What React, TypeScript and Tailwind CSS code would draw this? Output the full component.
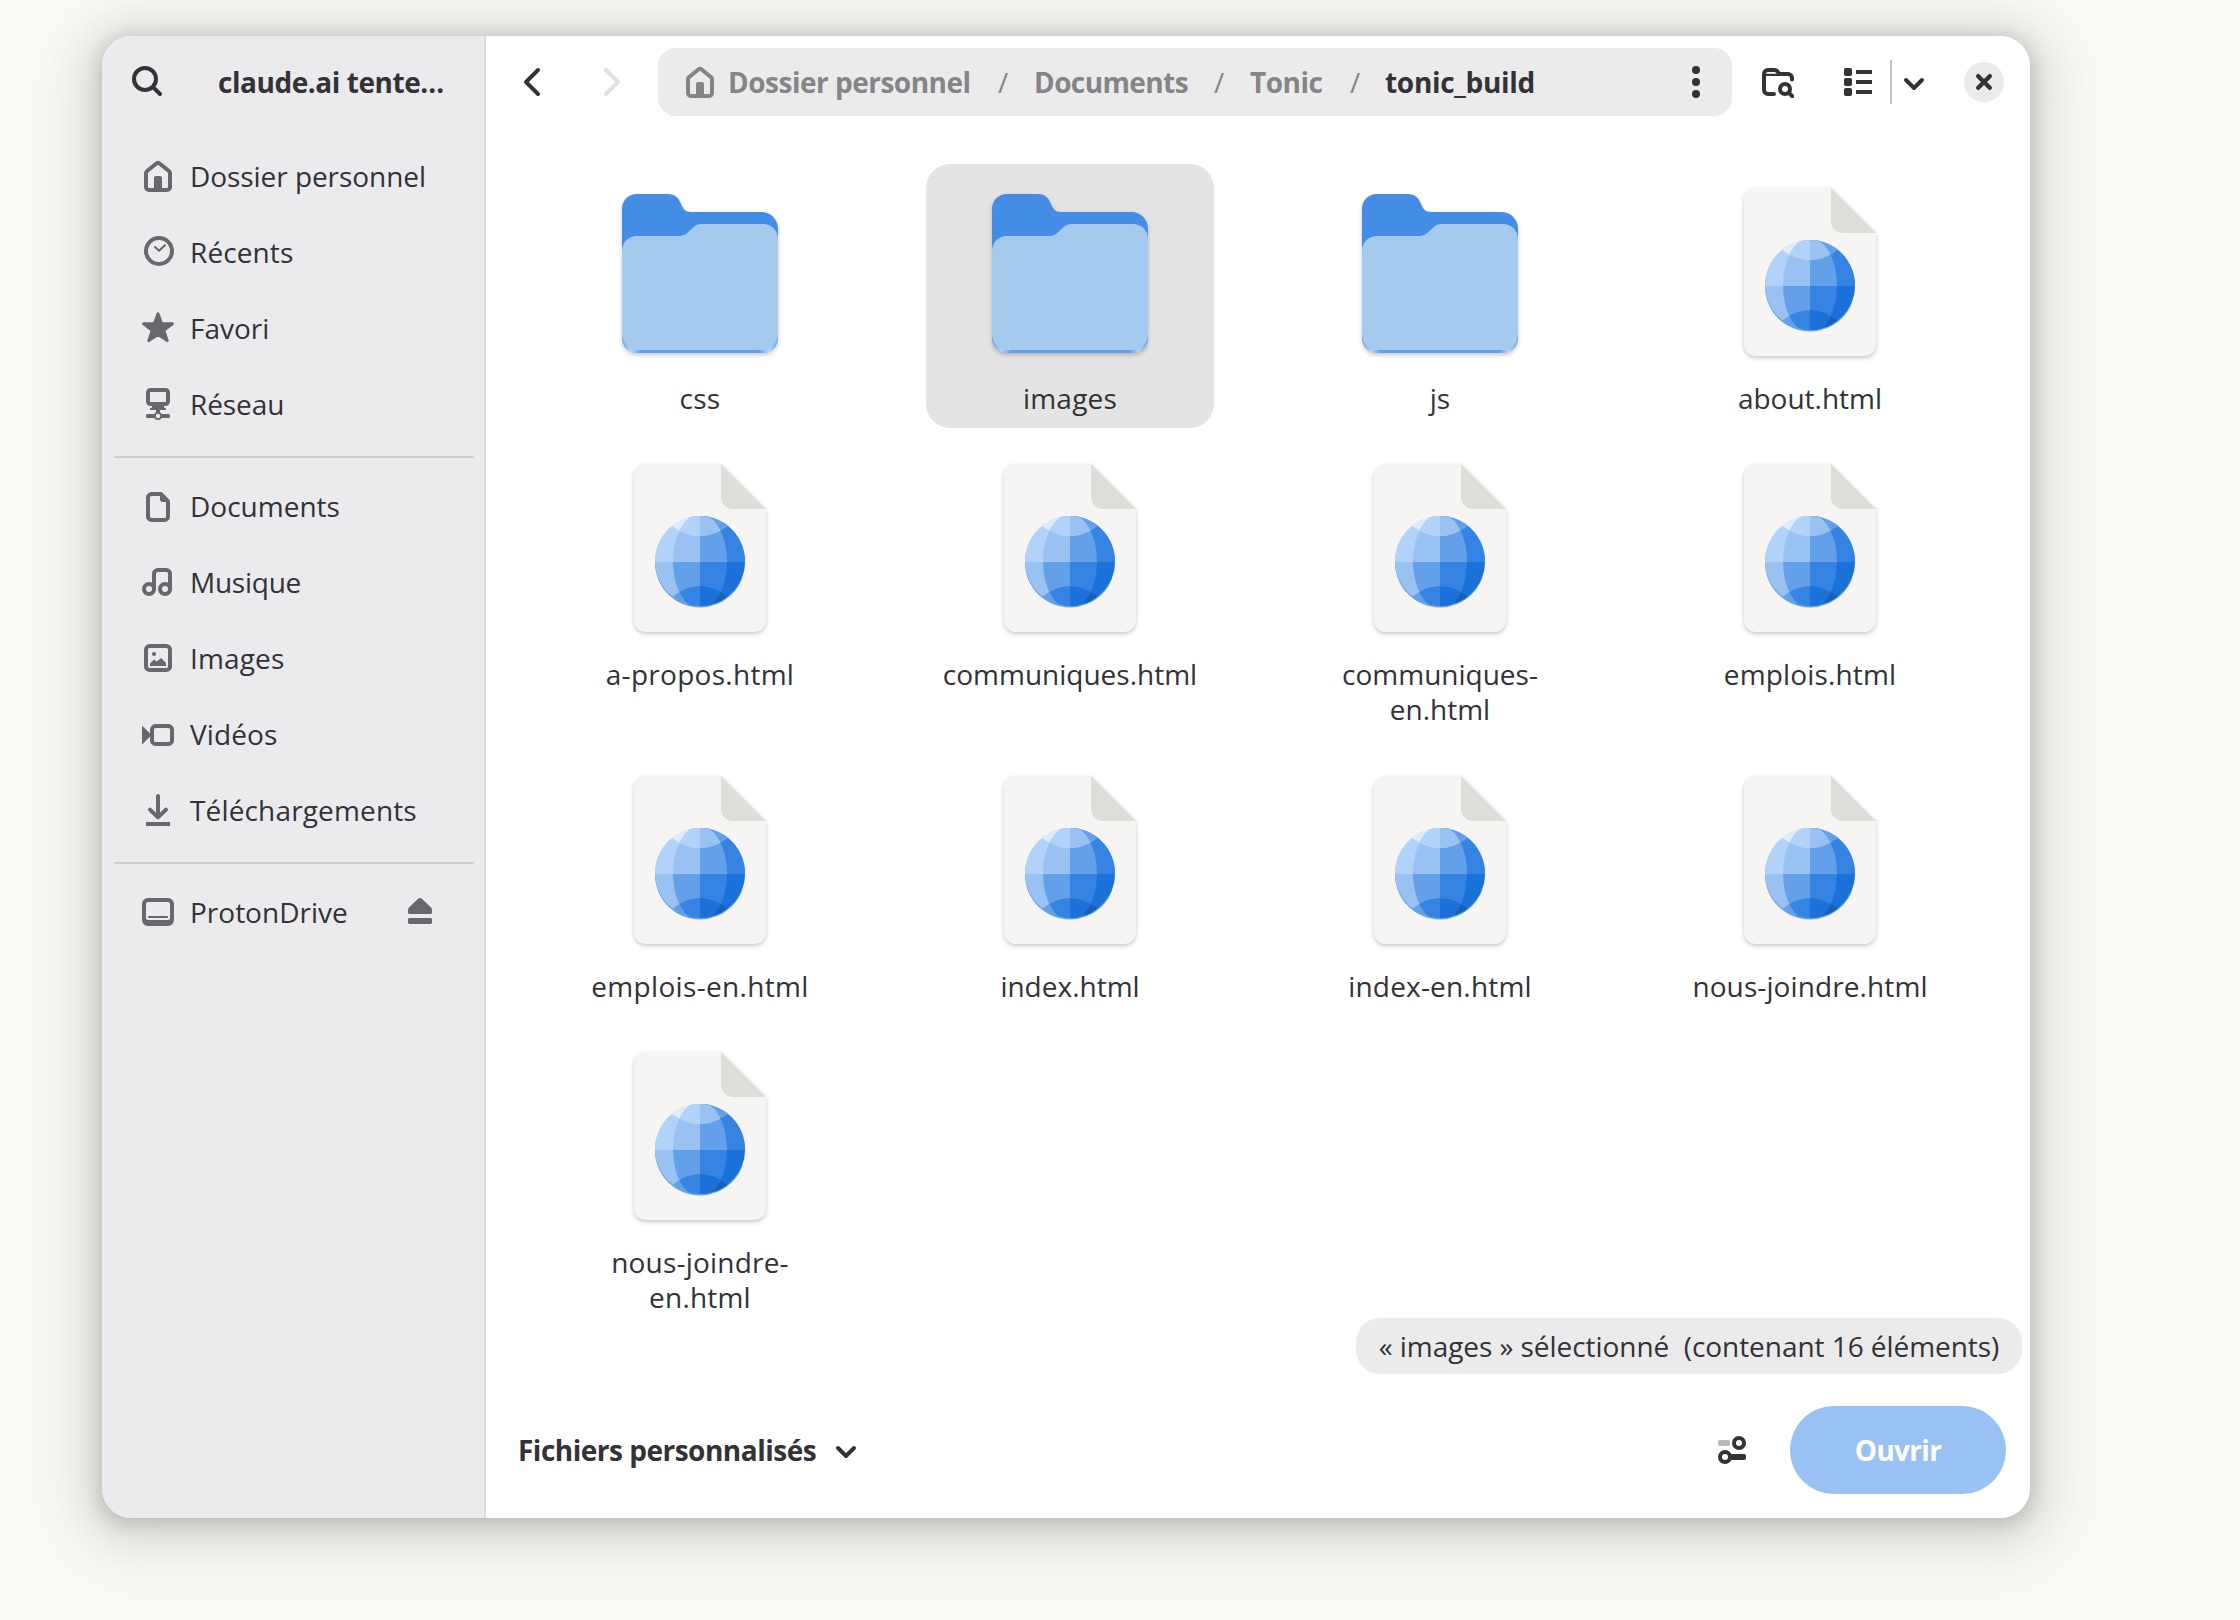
import React from "react";

type IconProps = { children: React.ReactNode; className?: string };

function Icon({ children, className = "" }: IconProps) {
  return (
    <svg
      viewBox="0 0 16 16"
      className={`h-8 w-8 shrink-0 ${className}`}
      fill="none"
      stroke="currentColor"
      strokeWidth="2"
      strokeLinecap="round"
      strokeLinejoin="round"
    >
      {children}
    </svg>
  );
}

const Solid = ({ children }: { children: React.ReactNode }) => (
  <g fill="currentColor" stroke="none">
    {children}
  </g>
);

const HomeIcon = () => (
  <Icon>
    <path d="M2 6.7v6.8A1.5 1.5 0 0 0 3.5 15h9a1.5 1.5 0 0 0 1.5-1.5V6.7a1.6 1.6 0 0 0-.55-1.2L8.65 1.65a1 1 0 0 0-1.3 0L2.55 5.5A1.6 1.6 0 0 0 2 6.7z" />
    <Solid>
      <path d="M6 15V9a1 1 0 0 1 1-1h2a1 1 0 0 1 1 1v6z" />
    </Solid>
  </Icon>
);

const RecentIcon = () => (
  <Icon>
    <circle cx="8.5" cy="7.5" r="6.5" />
    <path d="M6.5 5.5l2 1.9 3-2.8" strokeWidth="1" />
  </Icon>
);

const StarIcon = () => (
  <Icon>
    <path
      d="M8 .9l1.75 4.8 5.45.2-4.3 3.3 1.7 5.1L8 11.2l-4.6 3.1 1.7-5.1L.8 5.9l5.45-.2z"
      fill="currentColor"
      strokeWidth="1.5"
    />
  </Icon>
);

const NetworkIcon = () => (
  <Icon>
    <rect x="3" y="1" width="10" height="7" rx="1.3" />
    <Solid>
      <path d="M5 9h6v.6a.4.4 0 0 0 .4.4h.6v1H9v2.2H7V11H4v-1h.6a.4.4 0 0 0 .4-.4z" />
      <rect x="2" y="13" width="12" height="2" rx=".8" />
      <circle cx="8" cy="14" r="2" />
      <circle cx="8" cy="14" r="1.1" className="fill-[#ebebed]" />
    </Solid>
  </Icon>
);

const DocumentIcon = () => (
  <Icon>
    <path d="M4.8 2h4.6L13 5.6v7.6A1.8 1.8 0 0 1 11.2 15H4.8A1.8 1.8 0 0 1 3 13.2V3.8A1.8 1.8 0 0 1 4.8 2z" />
    <Solid>
      <path d="M9 2v2.8A1.2 1.2 0 0 0 10.2 6H13.5z" />
    </Solid>
  </Icon>
);

const MusicIcon = () => (
  <Icon>
    <circle cx="3.5" cy="11.5" r="2.5" />
    <circle cx="11.5" cy="11.5" r="2.5" />
    <path d="M6 11.5V3.8A1.8 1.8 0 0 1 7.8 2h4.4A1.8 1.8 0 0 1 14 3.8v7.7" />
  </Icon>
);

const ImageIcon = () => (
  <Icon>
    <rect x="2" y="2" width="12" height="12" rx="1.8" />
    <Solid>
      <circle cx="6" cy="6" r="1.05" />
      <path d="M4 12v-1.3l2-1.9 1.3 1L9.6 8l2.4 2.5V12z" />
    </Solid>
  </Icon>
);

const VideoIcon = () => (
  <Icon>
    <rect x="5" y="4" width="10" height="9" rx="1.8" />
    <Solid>
      <path d="M0 4.2v8.6a.2.2 0 0 0 .4.1L4.8 8.5.4 4.1A.2.2 0 0 0 0 4.2z" />
    </Solid>
  </Icon>
);

const DownloadIcon = () => (
  <Icon>
    <path d="M8 1v10.5M4 7.8l4 3.9 4-3.9" />
    <path d="M2 15h12" strokeLinecap="butt" />
  </Icon>
);

const DriveIcon = () => (
  <Icon>
    <Solid>
      <path
        fillRule="evenodd"
        d="M3 1h10a3 3 0 0 1 3 3v8a3 3 0 0 1-3 3H3a3 3 0 0 1-3-3V4a3 3 0 0 1 3-3zm0 2a1 1 0 0 0-1 1v7a1 1 0 0 0 1 1h10a1 1 0 0 0 1-1V4a1 1 0 0 0-1-1z"
      />
      <rect x="3" y="10" width="10" height="1" rx=".4" />
    </Solid>
  </Icon>
);

const EjectIcon = () => (
  <Icon>
    <Solid>
      <path d="M7.2 1.3a1.2 1.2 0 0 1 1.6 0l4.7 4.5c.3.3.5.7.5 1.1V8.2a.8.8 0 0 1-.8.8H2.8a.8.8 0 0 1-.8-.8V6.9c0-.4.2-.8.5-1.1z" />
      <rect x="2" y="11" width="12" height="3" rx=".7" />
    </Solid>
  </Icon>
);

const SearchIcon = () => (
  <Icon>
    <circle cx="6.5" cy="6.5" r="5.5" />
    <path d="M10.8 10.8L14 14" />
  </Icon>
);

const ChevronDown = () => (
  <Icon>
    <path d="M4 7l4 4 4-4" />
  </Icon>
);

const FolderSearchIcon = () => (
  <Icon>
    <path d="M6 14H3a2 2 0 0 1-2-2V4a2 2 0 0 1 2-2h3.3c.5 0 .9.2 1.2.5L8.8 4H13a2 2 0 0 1 2 2v.8" />
    <path d="M1.5 4.4H9" strokeWidth="1.1" />
    <circle cx="11.5" cy="11.5" r="2.5" />
    <path d="M13.5 13.5L15.1 15.1" />
  </Icon>
);

const ListIcon = () => (
  <Icon>
    <Solid>
      <rect x="1" y="1" width="4" height="4" rx=".9" />
      <rect x="1" y="6" width="4" height="4" rx=".9" />
      <rect x="1" y="11" width="4" height="4" rx=".9" />
      <rect x="7" y="2" width="8" height="2" />
      <rect x="7" y="7" width="8" height="2" />
      <rect x="7" y="12" width="8" height="2" />
    </Solid>
  </Icon>
);

const OptionsIcon = () => (
  <Icon>
    <rect x="1" y="3" width="6" height="3" rx="1" fill="#b8b8ba" stroke="none" />
    <circle cx="11.5" cy="4.5" r="2.5" />
    <circle cx="4.5" cy="11.5" r="2.5" />
    <rect x="7" y="10" width="8" height="3" rx="1" fill="currentColor" stroke="none" />
  </Icon>
);

function FolderArt() {
  return (
    <svg viewBox="0 0 192 192" className="h-48 w-48 shrink-0 drop-shadow-[0_2px_2px_rgba(0,0,0,0.22)]">
      <defs>
        <linearGradient id="folderEdge" x1="18" x2="174" y1="0" y2="0" gradientUnits="userSpaceOnUse">
          <stop offset="0" stopColor="#62a0ea" />
          <stop offset="0.06" stopColor="#afd4ff" />
          <stop offset="0.12" stopColor="#62a0ea" />
          <stop offset="0.88" stopColor="#62a0ea" />
          <stop offset="0.94" stopColor="#afd4ff" />
          <stop offset="1" stopColor="#62a0ea" />
        </linearGradient>
      </defs>
      <path
        fill="#438de6"
        d="M33 18h31c7 0 10.5 4 12.7 9.3C79 33 81 36 87 36h70c10 0 17 7.5 17 17v60H18V33c0-8.5 6.5-15 15-15z"
      />
      <path fill="url(#folderEdge)" d="M18 110h156v52c0 8.5-6.5 15-15 15H33c-8.5 0-15-6.5-15-15z" />
      <path
        fill="#a4caee"
        d="M33 60h42c5 0 8-2.5 12.5-7 4-3.7 6-5 11.5-5h60c8.5 0 15 6.5 15 15v96c-1 9-7 15-15 15H33c-8 0-14-6-15-15V75c0-8.5 6.5-15 15-15z"
      />
    </svg>
  );
}

function HtmlFileArt() {
  return (
    <svg viewBox="0 0 192 192" className="h-48 w-48 shrink-0 drop-shadow-[0_2px_2px_rgba(0,0,0,0.22)]">
      <defs>
        <clipPath id="globe">
          <circle cx="96" cy="109" r="45" />
        </clipPath>
        <clipPath id="meridian">
          <ellipse cx="96" cy="109.5" rx="27" ry="47.5" />
        </clipPath>
        <clipPath id="polarCaps">
          <path d="M68 60v14q28 20.5 56 0V60zM68 160v-15q28-22 56 0v15z" />
        </clipPath>
      </defs>
      <path fill="#f6f5f4" d="M42 12h75l45 45v111a12 12 0 0 1-12 12H42a12 12 0 0 1-12-12V24a12 12 0 0 1 12-12z" />
      <path fill="#deddda" d="M117 12v33a12 12 0 0 0 12 12h33z" />
      <circle cx="96" cy="110.5" r="45" fill="#62a0ea" />
      <g clipPath="url(#globe)">
        <path fill="#b2d3f9" d="M51 64h45v46H51z" />
        <path fill="#3584e4" d="M96 64h45v46H96z" />
        <path fill="#99c1f1" d="M51 110h45v45H51z" />
        <path fill="#1c71d8" d="M96 110h45v45H96z" />
        <g clipPath="url(#polarCaps)">
          <path fill="#deebfc" d="M51 60h45v50H51z" />
          <path fill="#62a0ea" d="M96 60h45v50H96z" />
          <path fill="#62a0ea" d="M51 110h45v50H51z" />
          <path fill="#1a5fb4" d="M96 110h45v50H96z" />
        </g>
        <g clipPath="url(#meridian)">
          <path fill="#99c1f1" d="M51 60h45v50H51z" />
          <path fill="#62a0ea" d="M96 60h45v50H96z" />
          <path fill="#62a0ea" d="M51 110h45v50H51z" />
          <path fill="#3584e4" d="M96 110h45v50H96z" />
          <g clipPath="url(#polarCaps)">
            <path fill="#b2d3f9" d="M51 60h45v50H51z" />
            <path fill="#99c1f1" d="M96 60h45v50H96z" />
            <path fill="#3584e4" d="M51 110h45v50H51z" />
            <path fill="#1c71d8" d="M96 110h45v50H96z" />
          </g>
        </g>
      </g>
    </svg>
  );
}

type Entry = { name: string; lines?: string[]; folder?: boolean; selected?: boolean; tracking?: string };

const entries: Entry[] = [
  { name: "css", folder: true, tracking: "tracking-[0.3px]" },
  { name: "images", folder: true, selected: true, tracking: "tracking-[0.2px]" },
  { name: "js", folder: true },
  { name: "about.html" },
  { name: "a-propos.html", tracking: "tracking-[0.28px]" },
  { name: "communiques.html" },
  { name: "communiques-en.html", lines: ["communiques-", "en.html"] },
  { name: "emplois.html", tracking: "tracking-[0.15px]" },
  { name: "emplois-en.html", tracking: "tracking-[0.33px]" },
  { name: "index.html" },
  { name: "index-en.html", tracking: "tracking-[0.18px]" },
  { name: "nous-joindre.html", tracking: "tracking-[0.1px]" },
  { name: "nous-joindre-en.html", lines: ["nous-joindre-", "en.html"], tracking: "tracking-[0.2px]" },
];

function FileCell({ entry }: { entry: Entry }) {
  return (
    <div
      className={`flex w-[288px] flex-col items-center rounded-[24px] pt-3 ${
        entry.selected ? "bg-[#e4e4e4]" : ""
      }`}
    >
      {entry.folder ? <FolderArt /> : <HtmlFileArt />}
      <div className={`mt-[13px] text-center leading-[35px] ${entry.tracking ?? ""}`}>
        {(entry.lines ?? [entry.name]).map((line) => (
          <div key={line}>{line}</div>
        ))}
      </div>
    </div>
  );
}

type PlaceProps = { icon: React.ReactNode; label: string; eject?: boolean; tracking?: string };

function Place({ icon, label, eject, tracking = "" }: PlaceProps) {
  return (
    <div className="flex h-[76px] items-center pr-[38px] pl-[28px]">
      <span className="text-[#68686c]">{icon}</span>
      <span className={`ml-4 flex-1 whitespace-nowrap ${tracking}`}>{label}</span>
      {eject && (
        <span className="text-[#68686c]">
          <EjectIcon />
        </span>
      )}
    </div>
  );
}

const Rule = () => <div className="h-[2px] bg-[#cdcdcf]" />;

function Sidebar() {
  return (
    <aside className="flex w-[384px] shrink-0 flex-col border-r-2 border-[#dadadc] bg-[#ebebed]">
      <div className="flex h-[92px] items-center pl-[30px] text-[#323237]">
        <SearchIcon />
        <span className="ml-[54px] font-bold tracking-[-0.45px] whitespace-nowrap">claude.ai tente…</span>
      </div>
      <nav className="flex flex-col pt-[10px] pr-[10px] pl-3">
        <Place icon={<HomeIcon />} label="Dossier personnel" tracking="tracking-[-0.06px]" />
        <Place icon={<RecentIcon />} label="Récents" tracking="tracking-[0.1px]" />
        <Place icon={<StarIcon />} label="Favori" />
        <Place icon={<NetworkIcon />} label="Réseau" tracking="tracking-[-0.1px]" />
        <div className="pt-[14px] pb-[10px]">
          <Rule />
        </div>
        <Place icon={<DocumentIcon />} label="Documents" />
        <Place icon={<MusicIcon />} label="Musique" tracking="tracking-[-0.25px]" />
        <Place icon={<ImageIcon />} label="Images" tracking="tracking-[0.15px]" />
        <Place icon={<VideoIcon />} label="Vidéos" tracking="tracking-[0.1px]" />
        <Place icon={<DownloadIcon />} label="Téléchargements" tracking="tracking-[0.15px]" />
        <div className="pt-[14px] pb-[10px]">
          <Rule />
        </div>
        <Place icon={<DriveIcon />} label="ProtonDrive" eject />
      </nav>
    </aside>
  );
}

function HeaderBar() {
  return (
    <header className="flex h-[92px] shrink-0 items-center px-3">
      <button className="flex h-[68px] w-[68px] items-center justify-center">
        <Icon>
          <path d="M11 2L5 8l6 6" />
        </Icon>
      </button>
      <button className="ml-3 flex h-[68px] w-[68px] items-center justify-center text-[#e0e0e1]">
        <Icon>
          <path d="M5 2l6 6-6 6" />
        </Icon>
      </button>
      <div className="ml-3 flex h-[68px] w-[1074px] items-center rounded-[18px] bg-[#ebebeb] pr-5 pl-[26px] font-bold tracking-[-0.5px] whitespace-nowrap text-[#858587]">
        <HomeIcon />
        <span className="ml-3 w-[246px]">Dossier personnel</span>
        <span className="w-[58px] text-center font-normal">/</span>
        <span className="w-[157px] pl-[2px] tracking-[-0.6px]">Documents</span>
        <span className="w-[60px] text-center font-normal">/</span>
        <span className="w-[76px] pl-px">Tonic</span>
        <span className="w-[60px] text-center font-normal">/</span>
        <span className="flex-1 tracking-[-0.3px] text-[#323237]">tonic_build</span>
        <Icon className="text-[#323237]">
          <Solid>
            <circle cx="8" cy="2" r="2" />
            <circle cx="8" cy="8" r="2" />
            <circle cx="8" cy="14" r="2" />
          </Solid>
        </Icon>
      </div>
      <button className="ml-3 flex h-[68px] w-[68px] items-center justify-center">
        <FolderSearchIcon />
      </button>
      <button className="ml-3 flex h-[68px] w-[66px] items-center justify-center pl-[2px]">
        <ListIcon />
      </button>
      <div className="h-11 w-[2px] bg-[#c2c2c3]" />
      <button className="flex h-[68px] w-11 items-center justify-center">
        <ChevronDown />
      </button>
      <button className="ml-auto flex h-[68px] w-[68px] items-center justify-center">
        <span className="flex h-10 w-10 items-center justify-center rounded-full bg-[#ebebeb]">
          <Icon>
            <path d="M5.1 5.1l5.8 5.8M10.9 5.1l-5.8 5.8" strokeWidth="2.2" />
          </Icon>
        </span>
      </button>
    </header>
  );
}

export default function App() {
  return (
    <div className="h-[1620px] w-[2240px] overflow-hidden bg-[#faf9f5] pt-9 pl-[102px] font-['Open_Sans','Noto_Sans',sans-serif] text-[28px] text-[#323237]">
      <div className="flex h-[1482px] w-[1928px] rounded-[30px] shadow-[0_4px_16px_4px_rgba(0,0,0,0.13),0_6px_40px_20px_rgba(0,0,0,0.09),0_12px_64px_32px_rgba(0,0,0,0.04)]">
        <div className="flex flex-1 overflow-hidden rounded-[30px] bg-white">
          <Sidebar />
          <main className="flex min-w-0 flex-1 flex-col">
            <HeaderBar />
            <div className="grid min-h-0 flex-1 grid-cols-[repeat(4,288px)] grid-rows-[264px_300px_264px_264px] content-start gap-x-[82px] gap-y-3 pt-9 pl-[70px]">
              {entries.map((entry) => (
                <FileCell key={entry.name} entry={entry} />
              ))}
            </div>
            <div className="flex justify-end pr-2">
              <div className="flex h-14 w-[666px] items-center justify-center rounded-[24px] bg-[#ebebeb] tracking-[-0.05px] whitespace-pre">
                {"« images » sélectionné  (contenant 16 éléments)"}
              </div>
            </div>
            <footer className="flex h-[144px] shrink-0 items-center pt-2 pr-6 pl-8">
              <span className="w-[298px] font-bold tracking-[-0.5px] whitespace-nowrap">Fichiers personnalisés</span>
              <span className="ml-[14px]">
                <ChevronDown />
              </span>
              <span className="ml-auto flex h-[68px] w-[68px] items-center justify-center">
                <OptionsIcon />
              </span>
              <button className="ml-6 h-[88px] w-[216px] rounded-full bg-[#99c1f1] font-bold tracking-[-0.7px] text-white">
                Ouvrir
              </button>
            </footer>
          </main>
        </div>
      </div>
    </div>
  );
}
